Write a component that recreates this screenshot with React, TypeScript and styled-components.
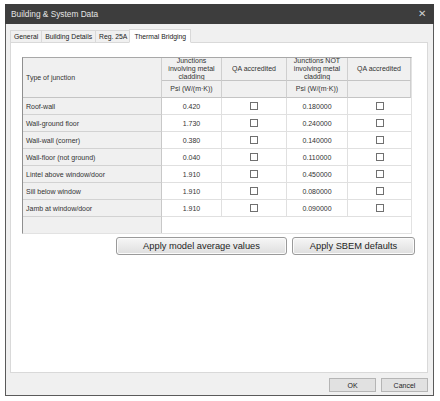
import React from "react";
import styled, { createGlobalStyle } from "styled-components";

const Global = createGlobalStyle`
  html, body { margin: 0; padding: 0; background: #ffffff; }
  body { font-family: "Liberation Sans", Arial, sans-serif; }
`;

const Page = styled.div`
  padding: 4px 0 0 5px;
  width: 440px;
  height: 401px;
  box-sizing: border-box;
`;

const Window = styled.div`
  width: 429px;
  height: 392px;
  box-sizing: border-box;
  border: 1px solid #5a5a5a;
  border-top: none;
  background: #f0f0f0;
  display: flex;
  flex-direction: column;
`;

const TitleBar = styled.div`
  height: 20px;
  background: #3d3d3d;
  color: #e4e4e4;
  display: flex;
  align-items: center;
  justify-content: space-between;
  padding: 0 8px 0 6px;
  font-size: 8.3px;
  margin: 0 -1px;
`;

const Close = styled.span`
  font-size: 10px;
  color: #d0d0d0;
  line-height: 1;
`;

const Body = styled.div`
  flex: 1;
  display: flex;
  flex-direction: column;
  padding: 4px 5px 0 4px;
`;

const TabStrip = styled.div`
  height: 14px;
  display: flex;
  align-items: flex-end;
  position: relative;
  z-index: 1;
`;

const Tab = styled.div<{ $active?: boolean }>`
  height: ${(p) => (p.$active ? "14px" : "12px")};
  box-sizing: border-box;
  padding: 0 ${(p) => (p.$active ? "4px" : "3px")};
  margin: 0 ${(p) => (p.$active ? "-2px" : "0")};
  display: flex;
  align-items: center;
  font-size: 6.8px;
  color: #222;
  background: ${(p) => (p.$active ? "#ffffff" : "#f0f0f0")};
  border: 1px solid #d9d9d9;
  border-bottom: ${(p) => (p.$active ? "1px solid #ffffff" : "none")};
  border-left: ${(p) => (p.$active ? "1px solid #d9d9d9" : "none")};
  margin-bottom: ${(p) => (p.$active ? "-1px" : "0")};
  &:first-child { border-left: 1px solid #d9d9d9; }
  position: relative;
  z-index: ${(p) => (p.$active ? 2 : 1)};
`;

const Panel = styled.div`
  height: 331px;
  box-sizing: border-box;
  background: #ffffff;
  border: 1px solid #d9d9d9;
  padding: 14px 0 0 11px;
`;

const Grid = styled.div`
  width: 390px;
  height: 177px;
  box-sizing: border-box;
  border-top: 1px solid #a8a8a8;
  border-left: 1px solid #8f8f8f;
  border-right: 1px solid #e2e2e2;
  border-bottom: 1px solid #e2e2e2;
  display: grid;
  grid-template-columns: 139px 60px 65px 61px 63px;
  grid-template-rows: 23px 17px repeat(7, 17px) 1fr;
  font-size: 7px;
  color: #333;
`;

const HeadCell = styled.div<{ $rows?: number; $left?: boolean }>`
  grid-row: span ${(p) => p.$rows ?? 1};
  background: #f0f0f0;
  border-right: 1px solid #cfcfcf;
  border-bottom: 1px solid #c4c4c4;
  display: flex;
  align-items: center;
  justify-content: ${(p) => (p.$left ? "flex-start" : "center")};
  text-align: ${(p) => (p.$left ? "left" : "center")};
  padding: 0 3px;
  overflow: hidden;
  line-height: 8px;
  &:last-child { border-right: none; }
`;

const RowHead = styled.div<{ $filler?: boolean }>`
  background: #f0f0f0;
  border-right: 1px solid #c8c8c8;
  border-bottom: ${(p) => (p.$filler ? "none" : "1px solid #d2d2d2")};
  display: flex;
  align-items: center;
  padding: 0 3px;
  white-space: nowrap;
`;

const Cell = styled.div<{ $last?: boolean }>`
  background: #ffffff;
  border-right: ${(p) => (p.$last ? "none" : "1px solid #e0e0e0")};
  border-bottom: 1px solid #e0e0e0;
  display: flex;
  align-items: center;
  justify-content: center;
`;

const Filler = styled.div`
  grid-column: span 4;
  background: #ffffff;
`;

const CheckBox = styled.span`
  width: 8px;
  height: 8px;
  box-sizing: border-box;
  border: 1px solid #707070;
  background: #fff;
`;

const ButtonRow = styled.div`
  display: flex;
  gap: 5px;
  margin: 3px 0 0 94px;
`;

const ActionButton = styled.button<{ $w: number }>`
  width: ${(p) => p.$w}px;
  height: 18px;
  box-sizing: border-box;
  border: 1px solid #9a9a9a;
  border-radius: 3px;
  background: linear-gradient(#f6f6f6, #dedede);
  font-family: "Liberation Sans", Arial, sans-serif;
  font-size: 9.3px;
  color: #1e1e1e;
  padding: 0;
  box-shadow: inset 0 0 0 1px #fbfbfb;
`;

const Footer = styled.div`
  display: flex;
  justify-content: flex-end;
  gap: 5px;
  margin-top: 5px;
`;

const DialogButton = styled.button`
  width: 47px;
  height: 14px;
  box-sizing: border-box;
  border: 1px solid #b5b5b5;
  background: #e1e1e1;
  font-family: "Liberation Sans", Arial, sans-serif;
  font-size: 7px;
  color: #1e1e1e;
  padding: 0;
`;

const rows: [string, string, string][] = [
  ["Roof-wall", "0.420", "0.180000"],
  ["Wall-ground floor", "1.730", "0.240000"],
  ["Wall-wall (corner)", "0.380", "0.140000"],
  ["Wall-floor (not ground)", "0.040", "0.110000"],
  ["Lintel above window/door", "1.910", "0.450000"],
  ["Sill below window", "1.910", "0.080000"],
  ["Jamb at window/door", "1.910", "0.090000"],
];

export default function App() {
  return (
    <>
      <Global />
      <Page>
        <Window>
          <TitleBar>
            <span>Building &amp; System Data</span>
            <Close>✕</Close>
          </TitleBar>
          <Body>
            <TabStrip>
              <Tab>General</Tab>
              <Tab>Building Details</Tab>
              <Tab>Reg. 25A</Tab>
              <Tab $active>Thermal Bridging</Tab>
            </TabStrip>
            <Panel>
              <Grid>
                <HeadCell $rows={2} $left>Type of junction</HeadCell>
                <HeadCell>Junctions involving metal cladding</HeadCell>
                <HeadCell>QA accredited</HeadCell>
                <HeadCell>Junctions NOT involving metal cladding</HeadCell>
                <HeadCell>QA accredited</HeadCell>
                <HeadCell>Psi (W/(m·K))</HeadCell>
                <HeadCell />
                <HeadCell>Psi (W/(m·K))</HeadCell>
                <HeadCell />
                {rows.map(([name, a, b]) => (
                  <React.Fragment key={name}>
                    <RowHead>{name}</RowHead>
                    <Cell>{a}</Cell>
                    <Cell><CheckBox /></Cell>
                    <Cell>{b}</Cell>
                    <Cell $last><CheckBox /></Cell>
                  </React.Fragment>
                ))}
                <RowHead $filler />
                <Filler />
              </Grid>
              <ButtonRow>
                <ActionButton $w={171}>Apply model average values</ActionButton>
                <ActionButton $w={123}>Apply SBEM defaults</ActionButton>
              </ButtonRow>
            </Panel>
            <Footer>
              <DialogButton>OK</DialogButton>
              <DialogButton>Cancel</DialogButton>
            </Footer>
          </Body>
        </Window>
      </Page>
    </>
  );
}
